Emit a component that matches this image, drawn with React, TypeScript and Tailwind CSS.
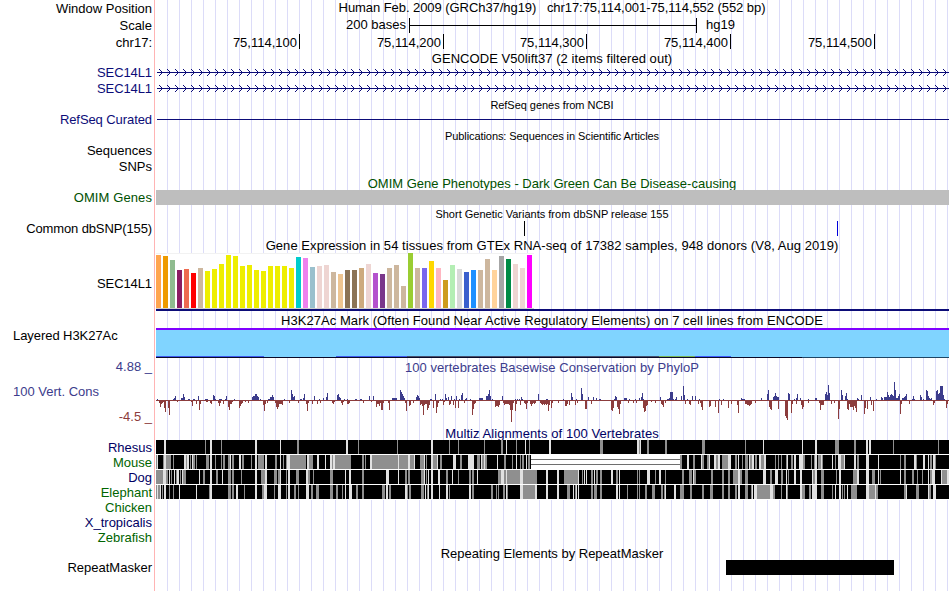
import type { ReactNode } from 'react'

type Span = [x: number, w: number]

// x coordinates in every track are browser pixels, the plot starts at 155
const PLOT_X = 155
const PLOT_W = 794

const TISSUES: [color: string, top: number][] = [
  ['#ffa54f', 255], ['#ee9a00', 256], ['#8fbc8f', 260], ['#8b1c62', 270], ['#ee6a50', 269], ['#ff0000', 273],
  ['#cdb79e', 268], ['#eeee00', 271], ['#eeee00', 269], ['#eeee00', 264], ['#eeee00', 255], ['#eeee00', 256],
  ['#eeee00', 266], ['#eeee00', 265], ['#eeee00', 270], ['#eeee00', 271], ['#eeee00', 266], ['#eeee00', 266],
  ['#eeee00', 266], ['#eeee00', 268], ['#00cdcd', 257], ['#ee82ee', 258], ['#9ac0cd', 267], ['#eed5d2', 266],
  ['#eed5d2', 265], ['#cdb79e', 272], ['#eec591', 274], ['#8b7355', 270], ['#8b7355', 270], ['#cdaa7d', 268],
  ['#eed5d2', 264], ['#b452cd', 273], ['#7a378b', 274], ['#cdb79e', 268], ['#cdb79e', 265], ['#cdb79e', 286],
  ['#9acd32', 253], ['#cdb79e', 268], ['#7a67ee', 268], ['#ffd700', 261], ['#ffb6c1', 268], ['#cd9b1d', 280],
  ['#b4eeb4', 265], ['#d9d9d9', 269], ['#3a5fcd', 272], ['#1e90ff', 270], ['#cdb79e', 270], ['#cdb79e', 259],
  ['#ffd39b', 270], ['#a6a6a6', 256], ['#008b45', 259], ['#eed5d2', 264], ['#eed5d2', 268], ['#ff00ff', 255],
]

// "x:h,h,h" runs of per-pixel phyloP scores
const CONSERVED =
  '157:1 173:1,2,4 181:2,2,6,3 188:1,1 193:1,1 198:4 205:1,1,1 213:5,4,1 219:1,1,1 225:1,4 234:1 252:3,4,4,6,6,4,3 260:1 268:1,1,3,3,5,3 284:1 291:10,6,3,4 300:1,1 303:2,6 314:4 319:1 323:2 326:3,7 337:5,6,3,2 344:1 347:1 355:1,1 360:1,1 369:4 373:4 392:2,2,2,2,2 400:10,8,6,4,2 416:3,5,4,2 430:1,1 435:6 440:1 442:1 445:6,2 448:3 451:4 454:1 456:4 459:1 461:5,7 465:1,2 470:1 479:2,2,2,2 486:4,4,6,10,4 492:1 502:4 515:1 517:1 519:1 521:3,1 538:6 546:1,1 563:1 571:7,3 576:1 581:12,6 588:3 593:3 596:2 599:1,1 614:1,4,3 624:2,2,2 629:1 635:1 639:2 641:3,7,1 660:3 667:1,1,2,8,8,8,1 675:1,3 681:4 683:14,5 687:1 692:4 695:4 699:1 719:1 723:1 741:2,1,1,1 761:2 767:6,10 773:3,4,7,4,3,3 788:7,6 794:1 796:2,6 800:2 808:1 815:2,2 825:6,8,5,15,7 841:10,5 845:4,7,1 857:2,1 861:5 870:3 876:1 881:3,2 884:3,3,3,8,5,3,5,6,5,4,18,10,2,2,4,6 902:2,2,3,4,6 912:1,4,1 920:5,3 923:1 926:10,9,4,2,1,2 936:9,10,6,7,14,14,14,5,1'
const ACCELERATED =
  '159:3,7,4,3,2,8,12 168:8,15 177:2 179:1 191:2,6 196:4 199:10,4 206:2,2 210:3,4 218:3,6,3 223:4 228:7,10,4,4,2 237:1 239:8,6,4,3 245:2 248:3 263:5,11,4 267:3 275:3,7,9,7,4,4,4,5 289:3 297:1,3 306:4,11,3 312:4 317:4 320:3,1 332:3,4,2 341:3,5,2 347:4,4,3 363:3 371:2 376:7,4,4,6,3,10,10,3 388:3,10 405:3,11 409:6,5 413:3 420:5,4,6,15,5,4,4,10,8,5 433:8 436:13,7,3 443:5,2 449:5,4 453:5 455:8 458:8 464:3 467:1 472:15,9,4,3 495:7,6,6,7,5 503:3,5,4,4,4,4,5,10,22,10,3 515:11,4 520:5 524:3,4,9,3 530:4,6,4,3,4,3 540:3,4,5,4,5,4,5,4,11,5 551:8,3 558:3,1 565:6,6,4 569:5 575:5 577:3 585:9,9 591:4 611:10,11,8 617:7,9,14,4 628:3 633:3 636:3 643:8,12,11,6,5 651:2 655:3 661:4,5,7 665:3 685:4 689:4,5 698:4 700:3,7,10 709:7,6 715:7 718:13 721:5 728:8 731:4 737:5,13 745:4,4,5,5,6,5,4 755:3 769:7,9,10 778:9 785:16,18,20 791:13,4 796:4 801:5,9,7 808:3 819:3,10,5,5,5 831:4 834:3 838:19,9 847:9,10,4,7,7,7,10,6,8,12 864:14,8 867:9 871:5 873:11 900:14,4 909:4 933:5,3 946:8,4'

// [start, width] of the partially and poorly conserved blocks per species
const SPECIES: { name: string; color: string; grey: Span[]; light: Span[]; gap?: Span }[] = [
  {
    name: 'Rhesus',
    color: 'text-[#000064]',
    grey: [[205, 1], [221, 1], [297, 2], [358, 1], [397, 1], [449, 1], [458, 1], [484, 1], [501, 2], [516, 1], [529, 1], [600, 3], [639, 1], [647, 2], [665, 2], [702, 3], [745, 1], [835, 4], [854, 2], [893, 1], [938, 1]],
    light: [[164, 2], [210, 2], [255, 2], [280, 1], [346, 2], [431, 2], [506, 1], [525, 1], [549, 2], [637, 2], [640, 1], [763, 1], [802, 1], [815, 2], [866, 2], [869, 2]],
  },
  {
    name: 'Mouse',
    color: 'text-[#006400]',
    grey: [[156, 1], [163, 8], [173, 1], [186, 1], [190, 1], [193, 2], [196, 1], [206, 3], [215, 1], [221, 1], [223, 2], [228, 2], [232, 2], [242, 2], [251, 1], [258, 6], [275, 2], [283, 1], [286, 1], [290, 16], [309, 4], [332, 1], [335, 16], [362, 2], [365, 1], [372, 26], [399, 9], [410, 4], [420, 4], [426, 1], [433, 4], [440, 2], [460, 2], [477, 3], [482, 2], [485, 2], [504, 2], [512, 1], [520, 1], [522, 2], [528, 2], [680, 2], [693, 2], [702, 2], [707, 2], [716, 2], [722, 6], [735, 2], [742, 1], [745, 3], [750, 2], [755, 2], [761, 3], [775, 1], [778, 1], [781, 1], [786, 1], [791, 2], [803, 2], [811, 1], [814, 1], [818, 3], [822, 1], [835, 1], [841, 3], [857, 2], [900, 1], [904, 2], [916, 1], [930, 2], [935, 1]],
    light: [[157, 1], [164, 2], [184, 2], [187, 2], [192, 1], [210, 2], [230, 1], [239, 2], [255, 2], [265, 2], [280, 1], [287, 1], [288, 2], [307, 2], [317, 2], [325, 1], [330, 2], [333, 2], [370, 2], [398, 1], [408, 2], [414, 1], [424, 1], [431, 2], [437, 1], [453, 3], [468, 6], [481, 1], [484, 1], [497, 1], [516, 1], [526, 1], [687, 2], [701, 1], [709, 1], [714, 2], [718, 2], [728, 3], [738, 1], [749, 1], [752, 2], [759, 2], [764, 2], [787, 1], [794, 2], [799, 4], [815, 2], [821, 1], [832, 1], [838, 3], [844, 1], [854, 2], [866, 3], [878, 1], [914, 2], [923, 2], [928, 1], [933, 2]],
    gap: [531, 149],
  },
  {
    name: 'Dog',
    color: 'text-[#000064]',
    grey: [[156, 7], [166, 2], [171, 1], [176, 1], [180, 1], [183, 3], [203, 2], [216, 2], [228, 3], [232, 2], [241, 1], [261, 4], [274, 3], [278, 2], [286, 1], [296, 3], [308, 2], [313, 1], [330, 3], [362, 2], [405, 2], [408, 2], [421, 3], [426, 1], [446, 2], [458, 1], [469, 2], [472, 2], [498, 3], [504, 2], [507, 13], [523, 12], [535, 2], [564, 14], [582, 1], [591, 2], [596, 2], [600, 2], [616, 2], [637, 1], [639, 1], [655, 1], [665, 1], [682, 2], [689, 3], [694, 2], [711, 2], [722, 2], [728, 2], [733, 5], [740, 2], [745, 3], [770, 2], [781, 2], [788, 1], [813, 2], [821, 3], [836, 1], [853, 4], [872, 3], [880, 1], [904, 2], [912, 2], [917, 1], [922, 1], [930, 2], [942, 5]],
    light: [[163, 1], [164, 2], [169, 1], [174, 1], [177, 2], [182, 1], [199, 1], [210, 2], [222, 1], [255, 2], [265, 2], [280, 1], [288, 2], [306, 2], [345, 1], [349, 2], [386, 3], [398, 1], [424, 1], [428, 1], [431, 2], [438, 2], [452, 1], [477, 1], [501, 3], [506, 1], [520, 3], [546, 2], [557, 2], [578, 1], [584, 1], [586, 1], [594, 1], [611, 2], [619, 1], [647, 3], [659, 2], [693, 1], [738, 2], [763, 3], [775, 3], [786, 1], [794, 2], [800, 2], [812, 1], [815, 2], [839, 2], [857, 2], [866, 3], [878, 1], [900, 1], [928, 1], [932, 3], [941, 1], [947, 2]],
  },
  {
    name: 'Elephant',
    color: 'text-[#006400]',
    grey: [[156, 1], [158, 2], [162, 1], [169, 1], [173, 1], [209, 1], [228, 3], [232, 2], [244, 1], [262, 2], [274, 1], [286, 1], [294, 2], [298, 1], [311, 2], [316, 3], [330, 3], [336, 2], [342, 1], [356, 2], [362, 2], [382, 3], [389, 2], [407, 1], [409, 2], [421, 3], [427, 1], [449, 1], [472, 2], [491, 2], [496, 1], [498, 1], [503, 2], [507, 1], [523, 12], [567, 3], [575, 1], [591, 2], [594, 3], [600, 2], [627, 1], [637, 1], [639, 1], [645, 2], [652, 3], [661, 2], [664, 1], [680, 4], [690, 2], [702, 2], [710, 3], [722, 2], [728, 2], [735, 2], [745, 3], [751, 1], [757, 13], [773, 2], [781, 1], [787, 1], [802, 3], [809, 2], [821, 3], [832, 1], [842, 1], [844, 1], [851, 6], [869, 6], [876, 2], [904, 2], [916, 3], [929, 2]],
    light: [[157, 1], [160, 1], [164, 2], [179, 1], [196, 1], [210, 2], [236, 2], [255, 2], [264, 3], [278, 3], [288, 2], [306, 3], [345, 1], [349, 3], [386, 2], [405, 2], [425, 1], [428, 1], [431, 2], [439, 1], [446, 2], [469, 2], [506, 1], [520, 3], [535, 2], [546, 2], [557, 2], [573, 1], [576, 1], [578, 1], [616, 2], [619, 1], [665, 1], [674, 2], [738, 2], [752, 1], [754, 3], [770, 3], [786, 1], [800, 2], [812, 3], [815, 2], [835, 1], [839, 2], [847, 1], [866, 3], [875, 1], [906, 1], [928, 1], [933, 3]],
  },
]

const RULER = [
  { pos: '75,114,100', width: 'w-[145px]' },
  { pos: '75,114,200', width: 'w-[144px]' },
  { pos: '75,114,300', width: 'w-[143px]' },
  { pos: '75,114,400', width: 'w-[144px]' },
  { pos: '75,114,500', width: 'w-[144px]' },
]

function parseRuns(src: string) {
  return src.split(' ').flatMap(run => {
    const [x, hs] = run.split(':')
    return hs.split(',').map((h, i) => ({ x: Number(x) + i, h: Number(h) }))
  })
}

const ups = parseRuns(CONSERVED)
const downs = parseRuns(ACCELERATED)

function Plot({ y, h, children }: { y: number; h: number; children: ReactNode }) {
  return (
    <svg
      width={PLOT_W}
      height={h}
      viewBox={`${PLOT_X} ${y} ${PLOT_W} ${h}`}
      shapeRendering="crispEdges"
      className="block shrink-0"
    >
      {children}
    </svg>
  )
}

function Row({ height, label, labelClass = '', children }: {
  height: string
  label?: ReactNode
  labelClass?: string
  children?: ReactNode
}) {
  return (
    <div className={`flex shrink-0 ${height}`}>
      <div className={`flex w-[152px] shrink-0 items-center justify-end whitespace-pre ${labelClass}`}>{label}</div>
      <div className="ml-[3px] flex w-[794px] shrink-0 items-center">{children}</div>
    </div>
  )
}

function Title({ children, className = 'pt-0.5' }: { children: ReactNode; className?: string }) {
  return <div className={`w-full whitespace-pre text-center ${className}`}>{children}</div>
}

function GeneLine({ y }: { y: number }) {
  const arrows = Array.from({ length: 99 }, (_, i) => 159 + i * 8)
  return (
    <Plot y={y - 7} h={15}>
      <rect x={157} y={y} width={792} height={1} fill="#0c0c78" />
      {arrows.map(x => (
        <path
          key={x}
          d={`M${x} ${y - 3}h1v1h1v1h1v1h1v1h-1v1h-1v1h-1v1h-1v-1h1v-1h1v-1h1v-1h-1v-1h-1v-1h-1z`}
          fill="#0c0c78"
        />
      ))}
    </Plot>
  )
}

function Expression() {
  return (
    <Plot y={253} h={58}>
      <rect x={156} y={253} width={378} height={56} fill="#fff" />
      <rect x={156} y={253} width={378} height={1} fill="#f2f2f2" />
      <rect x={156} y={308} width={378} height={1} fill="#cfcfcf" />
      {TISSUES.map(([color, top], i) => (
        <rect key={i} x={156 + i * 7} y={top} width={5} height={308 - top} fill={color} />
      ))}
      <rect x={156} y={309} width={793} height={2} fill="#0c0c78" />
    </Plot>
  )
}

function Acetylation() {
  return (
    <Plot y={328} h={30}>
      <rect x={156} y={328} width={793} height={2} fill="#8000ff" />
      <rect x={156} y={330} width={793} height={27} fill="#80d4ff" />
      <rect x={156} y={356} width={108} height={1} fill="#3c5af0" />
      <rect x={336} y={356} width={71} height={1} fill="#3c5af0" />
      <rect x={407} y={356} width={252} height={1} fill="#46506e" />
      <rect x={659} y={356} width={36} height={1} fill="#78b450" />
      <rect x={695} y={356} width={36} height={1} fill="#3c5aff" />
      <rect x={156} y={357} width={646} height={1} fill="#0a0a28" />
      <rect x={802} y={357} width={147} height={1} fill="#1e4664" />
    </Plot>
  )
}

function Conservation() {
  return (
    <Plot y={375} h={49}>
      <rect x={156} y={400} width={793} height={1} fill="#8c3c3c" />
      {ups.map(({ x, h }) => (
        <rect key={x} x={x} y={400 - h} width={1} height={h} fill="#3c3c8c" />
      ))}
      {downs.map(({ x, h }) => (
        <rect key={x} x={x} y={400} width={1} height={h} fill="#8c3c3c" />
      ))}
    </Plot>
  )
}

function Alignment({ grey, light, gap }: { grey: Span[]; light: Span[]; gap?: Span }) {
  return (
    <Plot y={0} h={15}>
      <rect x={156} y={0} width={793} height={15} fill="#fff" />
      <rect x={156} y={0} width={793} height={14} fill="#000" />
      {grey.map(([x, w]) => <rect key={x} x={x} y={0} width={w} height={14} fill="#8f8f8f" />)}
      {light.map(([x, w]) => <rect key={x} x={x} y={0} width={w} height={14} fill="#e1e1e1" />)}
      {gap && (
        <>
          <rect x={gap[0]} y={0} width={gap[1]} height={14} fill="#fff" />
          <rect x={gap[0]} y={4} width={gap[1]} height={1} fill="#6e6e6e" />
          <rect x={gap[0]} y={9} width={gap[1]} height={1} fill="#6e6e6e" />
        </>
      )}
    </Plot>
  )
}

export default function App() {
  return (
    <div className="h-[591px] w-[950px] overflow-hidden bg-white font-['Liberation_Sans',Arial,sans-serif] text-[13px] leading-none text-black">
      <div className="flex h-full w-[949px] flex-col bg-[linear-gradient(to_right,#ffb4b4_1px,transparent_1px),repeating-linear-gradient(to_right,#dcdcf8_0_1px,transparent_1px_12px)] bg-[position:154px_0,167px_0] bg-no-repeat">
        <Row height="h-[17px]" label="Window Position">
          <Title className="pb-0.5 tracking-[-0.06px]">Human Feb. 2009 (GRCh37/hg19)   chr17:75,114,001-75,114,552 (552 bp)</Title>
        </Row>
        <Row height="h-[16px]" label="Scale">
          <div className="w-[251px] pb-0.5 text-right">200 bases</div>
          <div className="ml-[3px] flex h-[15px] w-[288px] items-center border-x border-black">
            <div className="h-px w-full bg-black" />
          </div>
          <div className="ml-[9px] pb-0.5">hg19</div>
        </Row>
        <Row height="h-[17px]" label="chr17:" labelClass="pt-0.5">
          {RULER.map(({ pos, width }) => (
            <div key={pos} className={`flex h-[15px] items-center justify-end border-r border-black pt-0.5 pr-[2px] ${width}`}>
              {pos}
            </div>
          ))}
        </Row>

        <Row height="h-[15px]">
          <Title className="pt-0.5 tracking-[0.05px]">GENCODE V50lift37 (2 items filtered out)</Title>
        </Row>
        <Row height="h-[15px]" label="SEC14L1" labelClass="tracking-[-0.1px] text-[#0c0c78]"><GeneLine y={72} /></Row>
        <Row height="h-[17px]" label="SEC14L1" labelClass="tracking-[-0.1px] text-[#0c0c78]"><GeneLine y={88} /></Row>

        <Row height="h-[15px]">
          <Title className="pt-0.5 text-[11px] tracking-[-0.04px]">RefSeq genes from NCBI</Title>
        </Row>
        <Row height="h-[16px]" label="RefSeq Curated" labelClass="pb-0.5 tracking-[-0.08px] text-[#0c0c78]">
          <Plot y={112} h={16}>
            <rect x={157} y={119} width={792} height={1} fill="#0c0c78" />
          </Plot>
        </Row>

        <Row height="h-[15px]">
          <Title className="pt-0.5 text-[11px] tracking-[-0.08px]">Publications: Sequences in Scientific Articles</Title>
        </Row>
        <Row height="h-[16px]" label="Sequences" labelClass="pb-0.5" />
        <Row height="h-[16px]" label="SNPs" labelClass="pb-0.5" />

        <Row height="h-[15px]">
          <Title className="pt-0.5 text-[#005000]">OMIM Gene Phenotypes - Dark Green Can Be Disease-causing</Title>
        </Row>
        <Row height="h-[15px]" label="OMIM Genes" labelClass="tracking-[0.1px] text-[#005000]">
          <div className="ml-px h-full w-full bg-[#bebebe]" />
        </Row>

        <Row height="h-[16px]">
          <Title className="pt-0.5 text-[11px]">Short Genetic Variants from dbSNP release 155</Title>
        </Row>
        <Row height="h-[16px]" label="Common dbSNP(155)" labelClass="pb-0.5 tracking-[-0.12px]">
          <Plot y={221} h={16}>
            <rect x={524} y={221} width={1} height={15} fill="#000" />
            <rect x={837} y={221} width={1} height={15} fill="#0000dc" />
          </Plot>
        </Row>

        <Row height="h-[16px]">
          <Title className="tracking-[0.06px]">
            Gene Expression in 54 tissues from GTEx RNA-seq of 17382 samples, 948 donors (V8, Aug 2019)
          </Title>
        </Row>
        <Row height="h-[58px]" label="SEC14L1" labelClass="pt-0.5 tracking-[-0.1px]"><Expression /></Row>

        <Row height="h-[17px]">
          <Title className="pt-0.5 tracking-[0.05px]">
            H3K27Ac Mark (Often Found Near Active Regulatory Elements) on 7 cell lines from ENCODE
          </Title>
        </Row>
        <Row height="h-[30px]" label={<span className="mb-4 w-full pl-[13px] tracking-[-0.06px]">Layered H3K27Ac</span>}>
          <Acetylation />
        </Row>

        <Row height="h-[17px]" label="4.88 _" labelClass="text-[#3c3c8c]">
          <Title className="pt-0.5 tracking-[0.04px] text-[#3c3c8c]">100 vertebrates Basewise Conservation by PhyloP</Title>
        </Row>
        <Row
          height="h-[49px]"
          label={
            <div className="flex h-full w-full flex-col justify-between pt-[10px] pb-px">
              <span className="pl-[13px] text-[#3c3c8c]">100 Vert. Cons</span>
              <span className="text-right text-[#8c3c3c]">-4.5 _</span>
            </div>
          }
        >
          <Conservation />
        </Row>

        <Row height="h-[16px]">
          <Title className="pt-0.5 tracking-[0.07px] text-[#000064]">Multiz Alignments of 100 Vertebrates</Title>
        </Row>
        {SPECIES.map(({ name, color, ...blocks }) => (
          <Row key={name} height="h-[15px]" label={name} labelClass={color}><Alignment {...blocks} /></Row>
        ))}
        <Row height="h-[15px]" label="Chicken" labelClass="text-[#006400]" />
        <Row height="h-[15px]" label="X_tropicalis" labelClass="text-[#000064]" />
        <Row height="h-[15px]" label="Zebrafish" labelClass="text-[#006400]" />

        <Row height="h-[15px]"><Title>Repeating Elements by RepeatMasker</Title></Row>
        <Row height="h-[15px]" label="RepeatMasker">
          <div className="ml-[571px] h-full w-[168px] bg-black" />
        </Row>
      </div>
    </div>
  )
}
